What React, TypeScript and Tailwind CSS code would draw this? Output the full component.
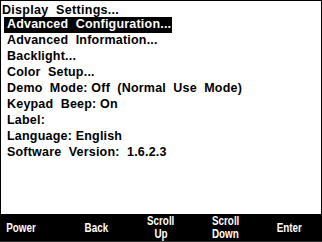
const items = [
  "Advanced  Configuration...",
  "Advanced  Information...",
  "Backlight...",
  "Color  Setup...",
  "Demo  Mode: Off  (Normal  Use  Mode)",
  "Keypad  Beep: On",
  "Label:",
  "Language: English",
  "Software  Version:  1.6.2.3",
];

const keys = [
  ["Power"],
  ["Back"],
  ["Scroll", "Up"],
  ["Scroll", "Down"],
  ["Enter"],
];

export default function App() {
  return (
    <div className="w-[322px] h-[242px] bg-black flex flex-col font-['Liberation_Sans',Arial,sans-serif]">
      <div className="flex-1 bg-white mx-px mt-px flex flex-col pt-[2px]">
        <div className="h-[14px] leading-[15px] pl-[1px] text-[12.5px] font-bold text-black whitespace-pre tracking-[0.3px]">
          Display  Settings...
        </div>
        {items.map((t, i) => (
          <div key={i} className="h-[16px] flex pl-[3px]">
            <span
              className={
                "leading-[15px] pl-[3px] pr-[1px] text-[12.5px] font-bold whitespace-pre tracking-[0.2px] " +
                (i === 0 ? "bg-black text-white" : "text-black")
              }
            >
              {t}
            </span>
          </div>
        ))}
      </div>
      <div className="h-[28px] grid grid-cols-5 text-white font-bold text-[12px] leading-[13px] border-b border-[#333]">
        {keys.map((k, i) => (
          <div
            key={i}
            className={
              "flex flex-col justify-center pt-px " +
              (i === 0 ? "items-start pl-[3px]" : "items-center")
            }
          >
            {k.map((l) => (
              <span key={l} className="scale-x-[0.82]">
                {l}
              </span>
            ))}
          </div>
        ))}
      </div>
    </div>
  );
}
